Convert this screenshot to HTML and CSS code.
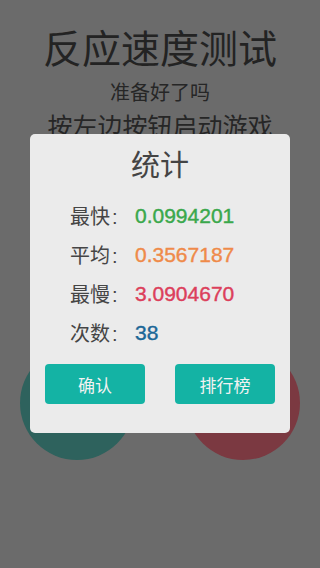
FILE: index.html
```html
<!DOCTYPE html>
<html lang="zh-CN">
<head>
<meta charset="utf-8">
<meta name="viewport" content="width=320, initial-scale=1">
<title>反应速度测试</title>
<link rel="stylesheet" href="styles.css">
</head>
<body>
<div class="screen">
  <h1 class="title">反应速度测试</h1>
  <p class="subtitle">准备好了吗</p>
  <p class="hint">按左边按钮启动游戏</p>
  <div class="pads">
    <div class="pad pad-left"></div>
    <div class="pad pad-right"></div>
  </div>

  <div class="dialog">
    <h2 class="dialog-title">统计</h2>
    <div class="stats">
      <div class="row"><span class="label">最快<span class="colon">:</span></span><span class="value fast">0.0994201</span></div>
      <div class="row"><span class="label">平均<span class="colon">:</span></span><span class="value avg">0.3567187</span></div>
      <div class="row"><span class="label">最慢<span class="colon">:</span></span><span class="value slow">3.0904670</span></div>
      <div class="row"><span class="label">次数<span class="colon">:</span></span><span class="value count">38</span></div>
    </div>
    <div class="actions">
      <button class="btn">确认</button>
      <button class="btn">排行榜</button>
    </div>
  </div>
</div>
</body>
</html>
```

FILE: styles.css
```css
* { box-sizing: border-box; }
html, body {
  margin: 0;
  padding: 0;
  background: #6b6b6b;
}
body {
  font-family: "Noto Sans CJK SC", "Noto Sans", sans-serif;
}
.screen {
  position: relative;
  width: 320px;
  height: 568px;
  background: #6b6b6b;
  display: flex;
  flex-direction: column;
  align-items: center;
  overflow: hidden;
}
.title {
  margin: 22px 0 0;
  font-size: 39px;
  line-height: 48px;
  font-weight: 400;
  color: #232323;
}
.subtitle {
  margin: 9px 0 0;
  font-size: 20px;
  line-height: 26px;
  color: #262626;
}
.hint {
  margin: 4.5px 0 0;
  font-size: 25px;
  line-height: 30px;
  color: #262626;
}
.pads {
  margin-top: 206.5px;
  width: 100%;
  padding: 0 20px;
  display: flex;
  justify-content: space-between;
}
.pad {
  width: 114px;
  height: 114px;
  border-radius: 50%;
}
.pad-left { background: #2e625d; }
.pad-right { background: #7b3941; }

.dialog {
  position: absolute;
  left: 30px;
  top: 134px;
  width: 260px;
  height: 299px;
  background: #ebebeb;
  border-radius: 5px;
  padding: 12px 15px 29px;
  display: flex;
  flex-direction: column;
}
.dialog-title {
  margin: 0;
  text-align: center;
  font-size: 29px;
  line-height: 34px;
  font-weight: 400;
  color: #444;
}
.stats {
  margin-top: 16px;
  padding-left: 25px;
  display: flex;
  flex-direction: column;
}
.row {
  display: flex;
  align-items: center;
  height: 39px;
}
.label {
  width: 65px;
  font-size: 20px;
  color: #454545;
  font-family: "Noto Sans CJK SC", "Liberation Sans", sans-serif;
}
.colon {
  font-family: "Liberation Sans", Arial, sans-serif;
  margin-left: 2px;
}
.value {
  font-family: "Liberation Sans", Arial, sans-serif;
  font-size: 21px;
  -webkit-text-stroke: 0.4px currentColor;
}
.fast { color: #3aa84b; }
.avg { color: #ef8a49; }
.slow { color: #dc3f5b; }
.count { color: #1b6797; }

.actions {
  margin-top: 12px;
  display: flex;
  justify-content: space-between;
}
.btn {
  width: 100px;
  height: 40px;
  border: none;
  border-radius: 4px;
  background: #14b3a4;
  color: #f2f2f2;
  font-family: "Noto Sans CJK SC", sans-serif;
  font-size: 17px;
  padding: 0;
}
```
